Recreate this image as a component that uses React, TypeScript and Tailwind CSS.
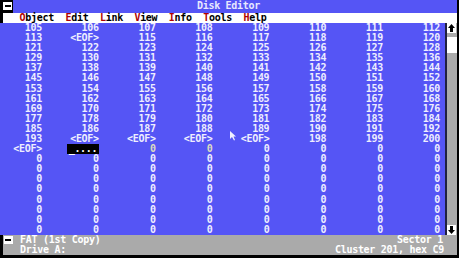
const rows: string[][] = [
  ["105", "106", "107", "108", "109", "110", "111", "112"],
  ["113", "<EOF>", "115", "116", "117", "118", "119", "120"],
  ["121", "122", "123", "124", "125", "126", "127", "128"],
  ["129", "130", "131", "132", "133", "134", "135", "136"],
  ["137", "138", "139", "140", "141", "142", "143", "144"],
  ["145", "146", "147", "148", "149", "150", "151", "152"],
  ["153", "154", "155", "156", "157", "158", "159", "160"],
  ["161", "162", "163", "164", "165", "166", "167", "168"],
  ["169", "170", "171", "172", "173", "174", "175", "176"],
  ["177", "178", "179", "180", "181", "182", "183", "184"],
  ["185", "186", "187", "188", "189", "190", "191", "192"],
  ["193", "<EOF>", "<EOF>", "<EOF>", "<EOF>", "198", "199", "200"],
  ["<EOF>", "CURSOR", "0", "0", "0", "0", "0", "0"],
  ...Array.from({ length: 8 }, () => ["0", "0", "0", "0", "0", "0", "0", "0"]),
];

const menu = ["Object", "Edit", "Link", "View", "Info", "Tools", "Help"];

function BoxIcon() {
  return (
    <div className="w-[9px] h-[8px] bg-white flex items-center justify-center">
      <div className="w-[6px] h-[2px] bg-black" />
    </div>
  );
}

function ArrowBtn({ down }: { down?: boolean }) {
  return (
    <div className="w-[9px] h-[10px] bg-white flex items-center justify-center">
      <svg width="7" height="8" viewBox="0 0 7 8" className={down ? "rotate-180" : ""}>
        <path d="M3.5 0 L7 4 L5 4 L5 8 L2 8 L2 4 L0 4 Z" fill="#000" />
      </svg>
    </div>
  );
}

export default function App() {
  return (
    <div
      className="relative w-[459px] h-[258px] bg-black flex flex-col overflow-hidden font-bold text-[10px] tracking-[-0.28px]"
      style={{ fontFamily: '"DejaVu Sans Mono", "Liberation Mono", monospace' }}
    >
      {/* title bar */}
      <div className="flex h-[12.7px] shrink-0">
        <div className="w-[13px] flex items-center pl-[3px]">
          <BoxIcon />
        </div>
        <div className="flex-1 bg-[#5555f5] text-[#e8e8ff] text-center pr-[13px] leading-[12.7px] whitespace-pre">
          Disk Editor
        </div>
        <div className="w-[2px]" />
      </div>

      {/* menu bar */}
      <div className="flex h-[10.3px] shrink-0 ml-[3px] mr-[2px] bg-white leading-[10.3px] pl-[16.5px] whitespace-pre text-black">
        {menu.map((m, i) => (
          <span key={m}>
            <span className="text-[#b00000]">{m[0]}</span>
            {m.slice(1)}
            {i < menu.length - 1 ? "  " : ""}
          </span>
        ))}
      </div>

      {/* data area */}
      <div className="flex h-[212px] shrink-0">
        <div className="w-[445px] bg-[#5555f5] text-[#eeeeff] flex flex-col">
          {rows.map((r, ri) => (
            <div key={ri} className="grid grid-cols-[42px_repeat(7,56.85px)] h-[10.1px] leading-[10.1px]">
              {r.map((c, ci) =>
                c === "CURSOR" ? (
                  <div key={ci} className="flex justify-end">
                    <span className="bg-black text-white px-[1.5px] whitespace-pre">_....</span>
                  </div>
                ) : (
                  <div
                    key={ci}
                    className={`text-right whitespace-pre ${ri === 12 && (ci === 2 || ci === 3) ? "text-[#dcdcc0]" : ""}`}
                  >
                    {c}
                  </div>
                )
              )}
            </div>
          ))}
        </div>
        <div className="w-[2px] bg-[#202040]" />
        <div className="w-[10px] bg-[#aaaaaa] flex flex-col">
          <ArrowBtn />
          <div className="h-[4px]" />
          <div className="h-[16px] bg-white" />
          <div className="flex-1" />
          <ArrowBtn down />
        </div>
        <div className="w-[2px]" />
      </div>

      {/* status bar */}
      <div className="flex flex-col h-[20.5px] shrink-0 ml-[3px] mr-[2px] bg-[#aaaaaa] text-white">
        <div className="flex h-[10.25px] leading-[10.25px] items-center">
          <div className="w-[17px] pl-[0.5px]">
            <BoxIcon />
          </div>
          <span className="whitespace-pre">FAT (1st Copy)</span>
          <span className="ml-auto pr-[14px] whitespace-pre">Sector 1</span>
        </div>
        <div className="flex h-[10.25px] leading-[10.25px]">
          <span className="pl-[17px] whitespace-pre">Drive A:</span>
          <span className="ml-auto pr-[13px] whitespace-pre">Cluster 201, hex C9</span>
        </div>
      </div>

      {/* mouse pointer */}
      <svg className="absolute left-[230px] top-[131px]" width="7" height="10" viewBox="0 0 7 10">
        <path d="M0 0 L0 8 L2 6 L4 9.5 L5 9 L3.5 5.5 L6 5.5 Z" fill="#f0f0ff" />
      </svg>
    </div>
  );
}
